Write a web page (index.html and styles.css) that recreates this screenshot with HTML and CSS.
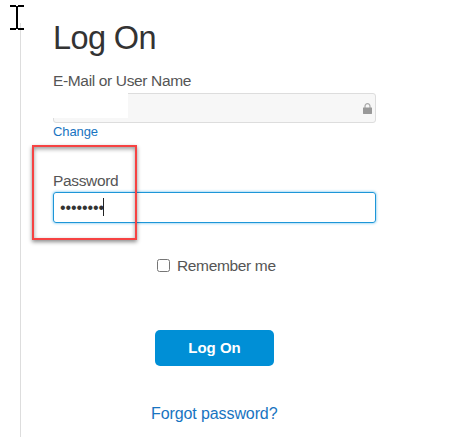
FILE: index.html
```
<!DOCTYPE html>
<html lang="en">

<head>
    <meta charset="utf-8">
    <meta name="viewport" content="width=device-width, initial-scale=1">
    <title>Log On</title>
    <link rel="stylesheet" href="styles.css">
</head>

<body>
    <form class="logon">
        <h1 class="title">Log On</h1>
        <label class="label">E-Mail or User Name</label>
        <div class="field field-locked">
            <span class="mask"></span>
            <svg class="lock" width="9" height="11" viewBox="0 0 9 11">
                <path d="M2 5V3.2a2.5 2.5 0 0 1 5 0V5" fill="none" stroke="#aaa" stroke-width="1.2"/>
                <rect x="0" y="4.4" width="9" height="6.6" rx=".4" fill="#999"/>
            </svg>
        </div>
        <a class="change">Change</a>
        <label class="label label-password">Password</label>
        <div class="field field-focus">
            <span class="dots">••••••••</span><span class="caret"></span>
        </div>
        <label class="remember"><input class="check" type="checkbox">Remember me</label>
        <button class="submit" type="button">Log On</button>
        <a class="forgot">Forgot password?</a>
    </form>
    <div class="highlight"></div>
    <svg class="cursor" width="14" height="25" viewBox="0 0 14 25" shape-rendering="crispEdges">
        <path d="M0 0h6v2H0zM8 0h6v2H8zM6 1h2v23H6zM0 23h6v2H0zM8 23h6v2H8z" fill="#000"/>
    </svg>
</body>

</html>
```

FILE: styles.css
```
* {
    box-sizing: border-box;
}

body {
    margin: 0;
    padding-top: 23px;
    background: #fff;
    color: #555;
    font-family: "Liberation Sans", Arial, sans-serif;
    font-size: 15.5px;
    letter-spacing: -.35px;
    overflow: hidden;
}

.logon {
    display: flex;
    flex-direction: column;
    width: 356px;
    height: 414px;
    margin-left: 20px;
    padding-left: 32px;
    border-left: 1px solid #ddd;
}

.title {
    margin: -3px 0 0;
    color: #333;
    font-size: 32.5px;
    font-weight: normal;
    letter-spacing: -.6px;
    line-height: 36px;
}

.label {
    margin-top: 16px;
    line-height: 18px;
}

.field {
    display: flex;
    align-items: center;
    height: 31px;
    border: 1px solid #ddd;
    border-radius: 3px;
}

.field-locked {
    justify-content: space-between;
    height: 30px;
    margin-top: 3px;
    padding-right: 3px;
    background: #f7f7f7;
}

/* blanked-out user name */
.mask {
    width: 76px;
    height: 25px;
    margin: -6px 0 0 -2px;
    background: #fff;
}

.change {
    margin-top: 1px;
    color: #1874c1;
    font-size: 13px;
    letter-spacing: -.1px;
    line-height: 15px;
}

.label-password {
    margin-top: 33px;
}

.field-focus {
    margin-top: 2px;
    padding-left: 6px;
    border-color: #1d96d8;
    box-shadow: 0 0 3px #58b8ea;
    color: #333;
    font-size: 16px;
    letter-spacing: -.1px;
}

.caret {
    width: 1px;
    height: 18px;
    margin: -1px 0 0 -1px;
    background: #222;
}

.remember {
    display: flex;
    align-items: center;
    margin: 34px 0 0 104px;
    line-height: 18px;
}

.check {
    width: 13px;
    height: 13px;
    margin: -2px 7px 0 0;
}

.submit {
    width: 119px;
    height: 36px;
    margin: 55px 0 0 102px;
    padding: 0 0 2px;
    border: 0;
    border-radius: 5px;
    background: #008fd6;
    color: #fff;
    font: bold 15px "Liberation Sans", Arial, sans-serif;
}

.forgot {
    margin: 39px 0 0 98px;
    color: #1874c1;
    font-size: 16px;
    letter-spacing: -.1px;
    line-height: 18px;
}

.highlight {
    position: absolute;
    top: 145px;
    left: 32px;
    width: 105px;
    height: 95px;
    border: 2px solid #f64343;
    box-shadow: 0 2px 4px rgba(0, 0, 0, .45), inset 0 2px 4px rgba(0, 0, 0, .4);
}

.cursor {
    position: absolute;
    top: 5px;
    left: 10px;
}
```
